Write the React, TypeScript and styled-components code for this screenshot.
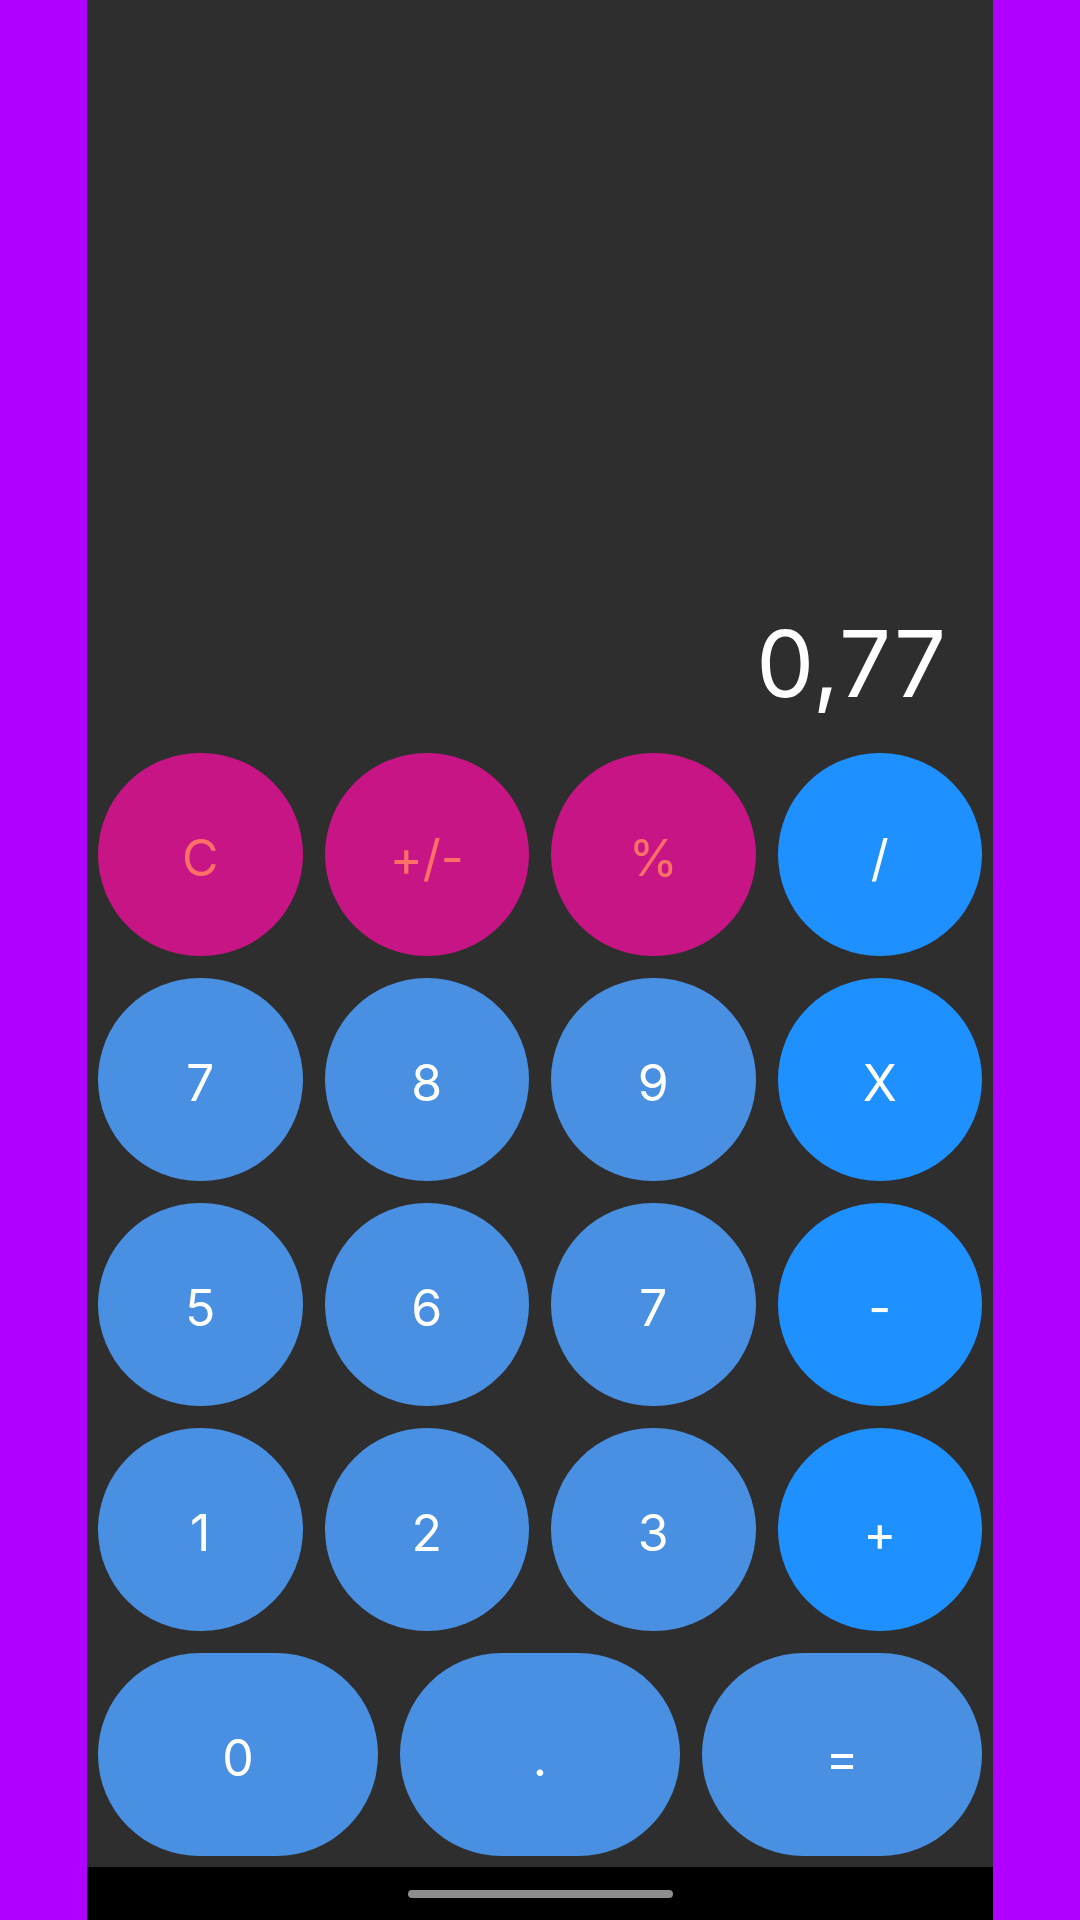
import React from "react";
import styled, { createGlobalStyle } from "styled-components";

const GlobalStyle = createGlobalStyle`
  html, body {
    margin: 0;
    padding: 0;
    background: #b000ff;
  }
  * { box-sizing: border-box; }
`;

const Page = styled.div`
  display: flex;
  justify-content: center;
  min-height: 1920px;
  background: #b000ff;
`;

const Phone = styled.div`
  width: 906px;
  height: 1920px;
  display: flex;
  flex-direction: column;
  background: #2e2e2e;
  font-family: "Inter", "Noto Sans", sans-serif;
`;

const Display = styled.div`
  flex: 1;
  display: flex;
  align-items: flex-end;
  justify-content: flex-end;
  padding: 0 46px 32px 0;
`;

const Result = styled.div`
  color: #ffffff;
  font-size: 92px;
  line-height: 1;
  font-weight: 400;
  letter-spacing: 1px;
`;

const Keypad = styled.div<{ $cols: number }>`
  display: grid;
  grid-template-columns: repeat(${(p) => p.$cols}, 1fr);
`;

type Kind = "fn" | "num" | "op";

const bg: Record<Kind, string> = {
  fn: "#c71585",
  num: "#4a90e2",
  op: "#1e90ff",
};

const Key = styled.button<{ $kind: Kind }>`
  margin: 11px;
  height: 203px;
  border: none;
  border-radius: 102px;
  background: ${(p) => bg[p.$kind]};
  color: ${(p) => (p.$kind === "fn" ? "#ff7066" : "#ffffff")};
  font-family: "Inter", "Noto Sans", sans-serif;
  font-size: 50px;
  font-weight: 400;
  display: flex;
  align-items: center;
  justify-content: center;
  padding: 6px 0 0;
  cursor: pointer;
`;

const NavBar = styled.div`
  height: 53px;
  background: #000000;
  display: flex;
  justify-content: center;
  padding-top: 23px;
`;

const HomeIndicator = styled.div`
  width: 265px;
  height: 8px;
  border-radius: 4px;
  background: #8e8e8e;
`;

const rows: { label: string; kind: Kind }[] = [
  { label: "C", kind: "fn" },
  { label: "+/-", kind: "fn" },
  { label: "%", kind: "fn" },
  { label: "/", kind: "op" },
  { label: "7", kind: "num" },
  { label: "8", kind: "num" },
  { label: "9", kind: "num" },
  { label: "X", kind: "op" },
  { label: "5", kind: "num" },
  { label: "6", kind: "num" },
  { label: "7", kind: "num" },
  { label: "-", kind: "op" },
  { label: "1", kind: "num" },
  { label: "2", kind: "num" },
  { label: "3", kind: "num" },
  { label: "+", kind: "op" },
];

const lastRow: { label: string; kind: Kind }[] = [
  { label: "0", kind: "num" },
  { label: ".", kind: "num" },
  { label: "=", kind: "num" },
];

export default function App() {
  return (
    <>
      <GlobalStyle />
      <Page>
        <Phone>
          <Display>
            <Result>0,77</Result>
          </Display>
          <Keypad $cols={4}>
            {rows.map((k, i) => (
              <Key key={i} $kind={k.kind}>
                {k.label}
              </Key>
            ))}
          </Keypad>
          <Keypad $cols={3}>
            {lastRow.map((k, i) => (
              <Key key={i} $kind={k.kind}>
                {k.label}
              </Key>
            ))}
          </Keypad>
          <NavBar>
            <HomeIndicator />
          </NavBar>
        </Phone>
      </Page>
    </>
  );
}
